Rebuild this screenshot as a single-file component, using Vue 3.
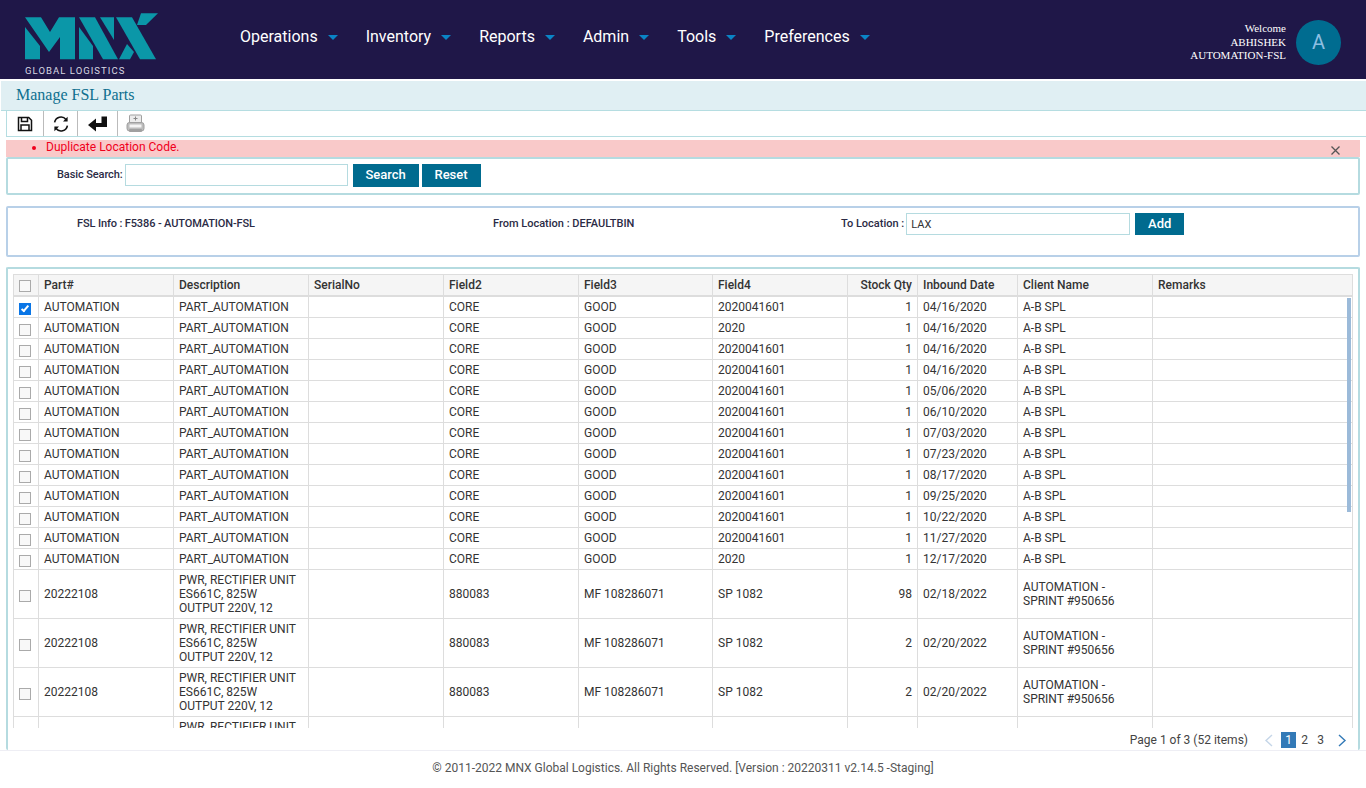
<template>
  <div class="page">
    <header class="topbar">
      <div class="brand">
        <svg class="logo" width="136" height="48" viewBox="24 12 136 48">
          <g fill="#0b97a8">
            <polygon points="25,17.300 41,17.300 50,32 59,17.300 75,17.300 75,59.300 60,59.300 60,37 49,52" />
            <polygon points="25,27 40,46 40,59.300 25,59.300" />
            <polygon points="79,17.300 95,17.300 118,59.300 103,59.300" />
            <polygon points="79,27 93,46 93,59.300 79,59.300" />
            <polygon points="100,17.300 114,17.300 114,40" />
            <polygon points="116,17.300 132,17.300 156,59.300 140,59.300" />
            <polygon points="119,59.300 127,44 134,52 130,59.300" />
            <polygon points="141,13.300 158,13.300 146,25 137,25" />
          </g>
        </svg>
        <span class="tagline">GLOBAL LOGISTICS</span>
      </div>
      <nav class="nav">
        <a v-for="item in menu" :key="item" class="nav-item">{{ item }}<i class="caret"></i></a>
      </nav>
      <div class="user">
        <div class="user-text">
          <div>Welcome</div>
          <div>ABHISHEK</div>
          <div>AUTOMATION-FSL</div>
        </div>
        <div class="avatar">A</div>
      </div>
    </header>

    <div class="title-bar">Manage FSL Parts</div>

    <div class="toolbar">
      <button class="tool tool-save">
        <svg width="16" height="16" viewBox="0 0 16 16" fill="none" stroke="#111" stroke-width="1.5">
          <path d="M1.500 1.500h10.200l2.800 2.800v10.200h-13z" />
          <path d="M4.500 1.500v4h6v-4" />
          <path d="M4 14.500v-5.500h8v5.500" />
        </svg>
      </button>
      <button class="tool tool-refresh">
        <svg width="16" height="16" viewBox="0 0 16 16" fill="none" stroke="#111" stroke-width="1.6">
          <path d="M1.600 6.400A6.500 6.500 0 0 1 13 3.400" />
          <path d="M14.400 9.600A6.500 6.500 0 0 1 3 12.600" />
          <path d="M14.600 .8v4.600h-4.600z" fill="#111" stroke="none" />
          <path d="M1.400 15.200v-4.600h4.600z" fill="#111" stroke="none" />
        </svg>
      </button>
      <button class="tool tool-enter">
        <svg width="20" height="16" viewBox="0 0 20 16" fill="#111">
          <path d="M13.500 0.500h5.500v10.500h-11v4.500l-8-6.500 8-6.500v4.500h5.500z" />
        </svg>
      </button>
      <button class="tool tool-print">
        <svg width="19" height="19" viewBox="0 0 19 19">
          <rect x="3.500" y="1" width="12" height="9" rx="1" fill="#ececec" stroke="#a0a0a0" />
          <path d="M7.500 4.500h4M9.500 2.500v4" stroke="#888" />
          <rect x="1" y="8.500" width="17" height="8.500" rx="2.500" fill="#bdbdbd" stroke="#a0a0a0" />
          <rect x="3.500" y="10.500" width="12" height="3" fill="#f4f4f4" />
          <rect x="3" y="15" width="13" height="3" rx="1" fill="#a0a0a0" />
        </svg>
      </button>
    </div>

    <div class="alert">
      <ul class="alert-list">
        <li>Duplicate Location Code.</li>
      </ul>
      <svg class="alert-close" width="9" height="9" viewBox="0 0 9 9" stroke="#555" stroke-width="1.300">
        <path d="M.5.5l8 8M8.500.5l-8 8" />
      </svg>
    </div>

    <section class="panel search-panel">
      <label class="field-label">Basic Search:</label>
      <input class="text-input search-input" type="text" />
      <button class="btn btn-search">Search</button>
      <button class="btn btn-reset">Reset</button>
    </section>

    <section class="panel info-panel">
      <div class="info info-fsl">FSL Info : F5386 - AUTOMATION-FSL</div>
      <div class="info info-from">From Location : DEFAULTBIN</div>
      <div class="info info-to">
        <label>To Location :</label>
        <input class="text-input to-input" type="text" value="LAX" />
        <button class="btn btn-add">Add</button>
      </div>
    </section>

    <section class="panel grid-panel">
      <div class="grid-scroll">
        <table class="grid">
          <colgroup>
            <col v-for="(w, i) in colWidths" :key="i" :style="{ width: w + 'px' }" />
          </colgroup>
          <thead>
            <tr>
              <th class="check-col"><input type="checkbox" class="check" /></th>
              <th v-for="col in columns" :key="col.label" :class="{ num: col.num }">{{ col.label }}</th>
            </tr>
          </thead>
          <tbody>
            <tr v-for="(row, i) in rows" :key="i">
              <td class="check-col"><input type="checkbox" class="check" :checked="i === 0" /></td>
              <td>{{ row.part }}</td>
              <td>{{ row.desc }}</td>
              <td></td>
              <td>{{ row.f2 }}</td>
              <td>{{ row.f3 }}</td>
              <td>{{ row.f4 }}</td>
              <td class="num">{{ row.qty }}</td>
              <td>{{ row.date }}</td>
              <td>{{ row.client }}</td>
              <td></td>
            </tr>
          </tbody>
        </table>
        <div class="scroll-thumb"></div>
      </div>
      <div class="pager">
        <span class="pager-info">Page 1 of 3 (52 items)</span>
        <svg class="pager-arrow prev" width="10" height="13" viewBox="0 0 10 13" fill="none" stroke="#c5d6e8" stroke-width="1.400">
          <path d="M8 1L2 6.500l6 5.500" />
        </svg>
        <span class="page-num active">1</span>
        <span class="page-num">2</span>
        <span class="page-num">3</span>
        <svg class="pager-arrow next" width="10" height="13" viewBox="0 0 10 13" fill="none" stroke="#337ab7" stroke-width="1.400">
          <path d="M2 1l6 5.500L2 12" />
        </svg>
      </div>
    </section>

    <footer class="footer">© 2011-2022 MNX Global Logistics. All Rights Reserved. [Version : 20220311 v2.14.5 -Staging]</footer>
  </div>
</template>

<script setup>
const menu = ['Operations', 'Inventory', 'Reports', 'Admin', 'Tools', 'Preferences']

const colWidths = [25, 135, 135, 135, 135, 134, 135, 70, 100, 135, 200]

const columns = [
  { label: 'Part#' },
  { label: 'Description' },
  { label: 'SerialNo' },
  { label: 'Field2' },
  { label: 'Field3' },
  { label: 'Field4' },
  { label: 'Stock Qty', num: true },
  { label: 'Inbound Date' },
  { label: 'Client Name' },
  { label: 'Remarks' }
]

const autoDates = [
  ['2020041601', '04/16/2020'],
  ['2020', '04/16/2020'],
  ['2020041601', '04/16/2020'],
  ['2020041601', '04/16/2020'],
  ['2020041601', '05/06/2020'],
  ['2020041601', '06/10/2020'],
  ['2020041601', '07/03/2020'],
  ['2020041601', '07/23/2020'],
  ['2020041601', '08/17/2020'],
  ['2020041601', '09/25/2020'],
  ['2020041601', '10/22/2020'],
  ['2020041601', '11/27/2020'],
  ['2020', '12/17/2020']
]

const autoRows = autoDates.map(([f4, date]) => ({
  part: 'AUTOMATION',
  desc: 'PART_AUTOMATION',
  f2: 'CORE',
  f3: 'GOOD',
  f4,
  qty: 1,
  date,
  client: 'A-B SPL'
}))

const pwrRows = [
  ['98', '02/18/2022'],
  ['2', '02/20/2022'],
  ['2', '02/20/2022'],
  ['2', '02/20/2022']
].map(([qty, date]) => ({
  part: '20222108',
  desc: 'PWR, RECTIFIER UNIT ES661C, 825W OUTPUT 220V, 12',
  f2: '880083',
  f3: 'MF 108286071',
  f4: 'SP 1082',
  qty,
  date,
  client: 'AUTOMATION - SPRINT #950656'
}))

const rows = [...autoRows, ...pwrRows]
</script>

<style>
html,
body {
  margin: 0;
  background: #fff;
}
</style>

<style scoped>
.page {
  font-family: Roboto, "Liberation Sans", sans-serif;
  font-size: 12px;
  color: #333;
  height: 788px;
  overflow: hidden;
}

.topbar {
  height: 79px;
  background: #1f1748;
  display: flex;
  color: #fff;
}

.brand {
  width: 240px;
  flex: none;
  position: relative;
}

.logo {
  position: absolute;
  left: 24px;
  top: 12px;
}

.tagline {
  position: absolute;
  left: 25px;
  top: 65px;
  font-size: 9.5px;
  letter-spacing: 1.05px;
  line-height: 12px;
  color: #d8d8e2;
}

.nav {
  display: flex;
  gap: 28px;
  padding-top: 27px;
}

.nav-item {
  font-size: 16px;
  line-height: 19px;
  height: 19px;
  display: flex;
  white-space: nowrap;
}

.caret {
  width: 0;
  height: 0;
  margin: 8px 0 0 10px;
  border-left: 5.5px solid transparent;
  border-right: 5.5px solid transparent;
  border-top: 5px solid #0a84c6;
}

.user {
  margin-left: auto;
  display: flex;
  padding: 20px 25px 0 0;
}

.user-text {
  font-family: "Liberation Serif", serif;
  font-size: 11px;
  line-height: 13.6px;
  text-align: right;
  padding-top: 2px;
  margin-right: 10px;
}

.avatar {
  width: 45px;
  height: 45px;
  border-radius: 50%;
  background: #006c90;
  color: #8dbfe2;
  font-size: 20px;
  line-height: 45px;
  text-align: center;
}

.title-bar {
  margin: 2px 0 0 1px;
  height: 29px;
  background: #e0eff3;
  border-bottom: 1px solid #b5dde1;
  padding-left: 15px;
  font-family: "Liberation Serif", serif;
  font-size: 16px;
  line-height: 28px;
  color: #0e6f8f;
}

.toolbar {
  margin-left: 6px;
  height: 25px;
  border-left: 1px solid #b5dde1;
  border-bottom: 1px solid #b5dde1;
  display: flex;
}

.tool {
  border: 0;
  background: none;
  padding: 0;
  height: 25px;
  border-right: 1px solid #bbb;
  display: flex;
  align-items: center;
  justify-content: center;
}

.tool-save {
  width: 37px;
}

.tool-refresh {
  width: 34px;
}

.tool-enter {
  width: 40px;
}

.tool-print {
  width: 35px;
  border-right: 0;
}

.alert {
  margin: 3px 6px 0;
  height: 17px;
  background: #f9c9c9;
  color: #f0001c;
  position: relative;
  line-height: 15px;
}

.alert-list {
  margin: 0;
  padding-left: 40px;
}

.alert-close {
  position: absolute;
  right: 20px;
  top: 6px;
}

.panel {
  margin: 0 6px;
  border: 2px solid #b5dbe0;
  border-radius: 2px;
  background: #fff;
  box-sizing: border-box;
}

.search-panel {
  height: 38px;
  display: flex;
  align-items: flex-start;
  padding: 5px 0 0 49px;
}

.field-label {
  font-size: 11px;
  font-weight: 500;
  letter-spacing: -0.1px;
  color: #2b2b45;
  line-height: 22px;
  margin-right: 2px;
}

.text-input {
  box-sizing: border-box;
  height: 22px;
  border: 1px solid #b5dbe0;
  background: #fff;
  padding: 0 4px;
  font: 11px Roboto, sans-serif;
  color: #333;
  outline: none;
}

.search-input {
  width: 223px;
  margin-right: 5px;
}

.btn {
  border: 0;
  background: #006b8f;
  color: #fff;
  font: 500 13px Roboto, sans-serif;
  height: 23px;
  padding: 0 0 2px;
}

.btn-search {
  width: 66px;
  margin-right: 3px;
}

.btn-reset {
  width: 59px;
}

.info-panel {
  margin-top: 11px;
  height: 51px;
  border-color: #b8d0e8;
  display: flex;
  padding-top: 5px;
  padding-left: 69px;
}

.info {
  font-size: 11px;
  font-weight: 500;
  color: #2b2b45;
  line-height: 22px;
}

.info-fsl {
  width: 416px;
  letter-spacing: -0.12px;
}

.info-from {
  width: 348px;
}

.info-to {
  display: flex;
}

.to-input {
  width: 224px;
  margin: 0 5px 0 2px;
}

.btn-add {
  width: 49px;
  height: 22px;
}

.grid-panel {
  margin-top: 10px;
  height: 483px;
  border-bottom: 0;
  padding: 5px 5px 0 5px;
  position: relative;
}

.grid-scroll {
  height: 454px;
  overflow: hidden;
  position: relative;
}

.grid {
  border-collapse: collapse;
  table-layout: fixed;
  width: 1339px;
  color: #333;
}

.grid th,
.grid td {
  border: 1px solid #ddd;
  padding: 3px 5px;
  line-height: 14px;
  text-align: left;
  overflow: hidden;
}

.grid th {
  background: #f5f5f5;
  font-weight: 500;
  color: #333;
  padding: 3px 5px;
  border-bottom-width: 2px;
}

.grid .num {
  text-align: right;
}

.grid .check-col {
  padding: 0 0 0 5px;
}

.check {
  appearance: none;
  box-sizing: border-box;
  width: 12px;
  height: 12px;
  margin: 3px 0 0;
  border: 1px solid #aaa;
  background: #f8f8f8;
  vertical-align: top;
  position: relative;
}

.grid th .check {
  margin-top: 2px;
}

.check:checked {
  background: #0a76e6;
  border-color: #0a76e6;
}

.check:checked::after {
  content: "";
  position: absolute;
  left: 3px;
  top: 0;
  width: 4px;
  height: 8px;
  border: solid #fff;
  border-width: 0 2px 2px 0;
  transform: rotate(40deg);
  box-sizing: border-box;
}

.scroll-thumb {
  position: absolute;
  left: 1334px;
  top: 24px;
  width: 4px;
  height: 214px;
  background: #9bbad9;
}

.pager {
  height: 24px;
  display: flex;
  align-items: center;
  justify-content: flex-end;
  padding-right: 6px;
  color: #444;
}

.pager-info {
  margin-right: 16px;
}

.pager-arrow.prev {
  margin-right: 6px;
}

.pager-arrow.next {
  margin-left: 9px;
}

.page-num {
  width: 15px;
  height: 16px;
  line-height: 16px;
  text-align: center;
  margin-left: 1px;
}

.page-num.active {
  background: #337ab7;
  color: #fff;
}

.footer {
  border-top: 1px solid #eeeef4;
  padding-top: 10px;
  text-align: center;
  line-height: 14px;
  color: #555;
}
</style>
